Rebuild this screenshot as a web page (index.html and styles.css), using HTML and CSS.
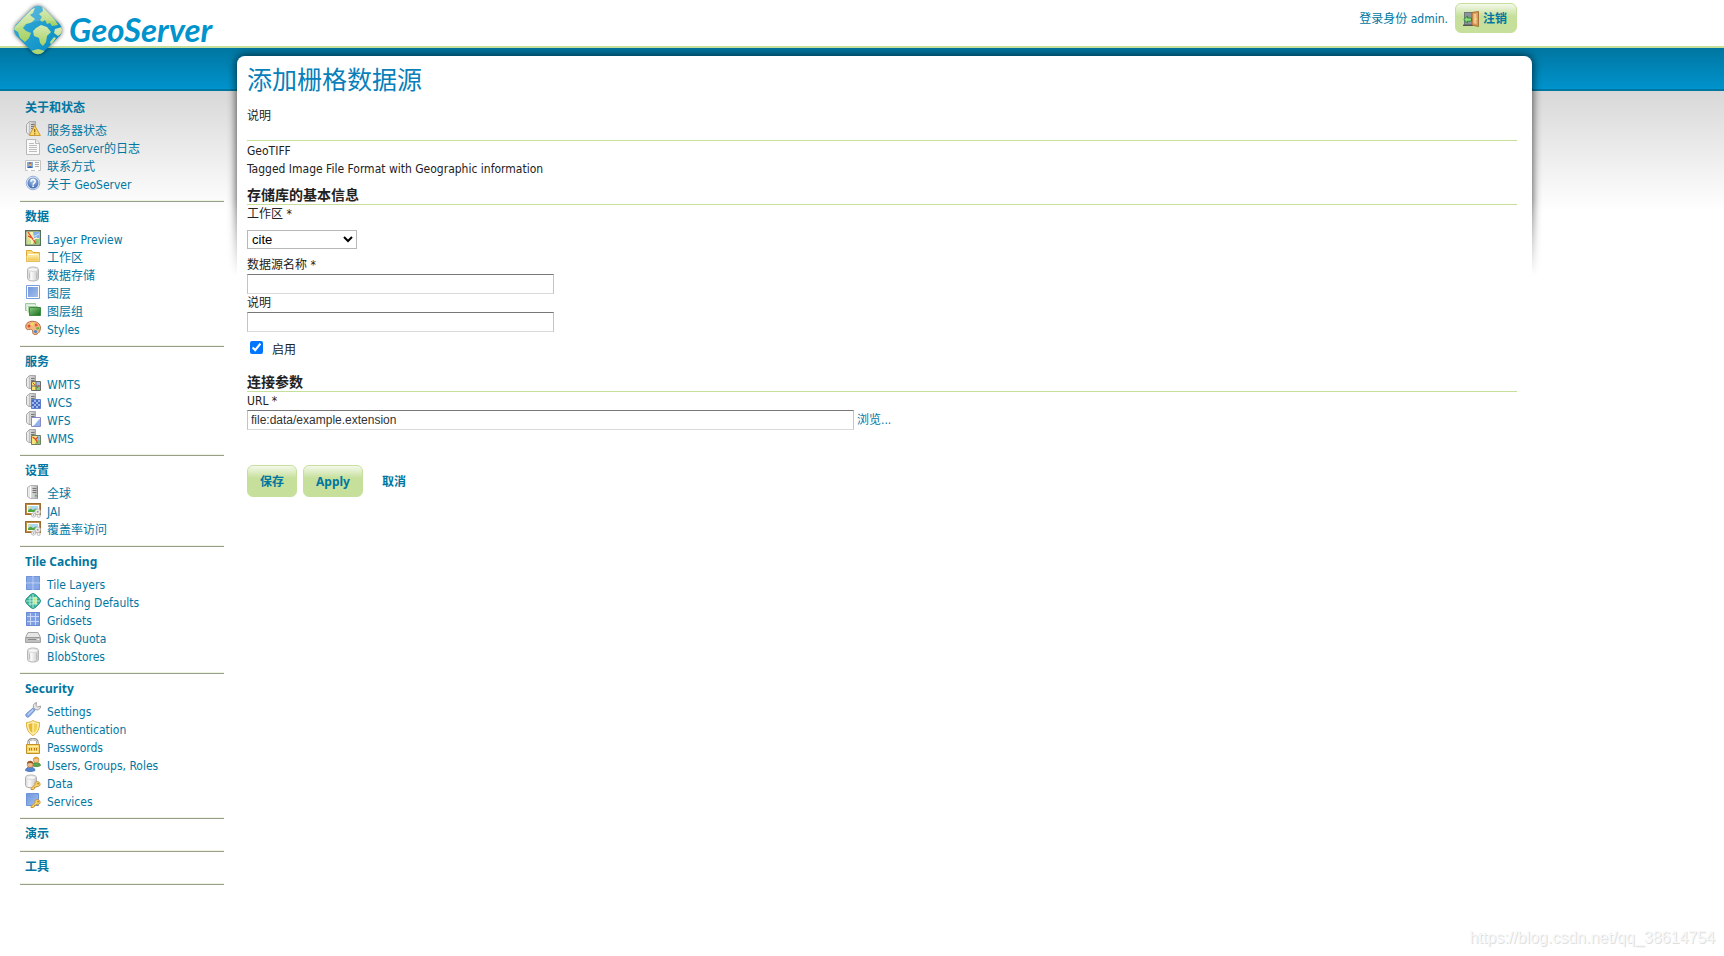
FILE: index.html
```html
<!DOCTYPE html>
<html lang="zh-CN">
<head>
<meta charset="utf-8">
<title>GeoServer: 添加栅格数据源</title>
<link rel="stylesheet" href="styles.css">
</head>
<body>
<svg class="sprite" aria-hidden="true">
  <defs>
    <linearGradient id="g-srv" x1="0" x2="1"><stop offset="0" stop-color="#f2f2f2"/><stop offset="1" stop-color="#b5b5b5"/></linearGradient>
    <linearGradient id="g-cyl" x1="0" x2="1"><stop offset="0" stop-color="#d8d8d8"/><stop offset=".35" stop-color="#fafafa"/><stop offset="1" stop-color="#c4c4c4"/></linearGradient>
    <linearGradient id="g-blue" x1="0" y1="0" x2="1" y2="1"><stop offset="0" stop-color="#6e97da"/><stop offset="1" stop-color="#a6c0ee"/></linearGradient>
    <linearGradient id="g-gold" x1="0" x2="0" y1="0" y2="1"><stop offset="0" stop-color="#fdf0a8"/><stop offset="1" stop-color="#f0c24a"/></linearGradient>
    <linearGradient id="g-green" x1="0" y1="0" x2="1" y2="1"><stop offset="0" stop-color="#8ccb85"/><stop offset="1" stop-color="#176b1c"/></linearGradient>
    <radialGradient id="g-help" cx=".5" cy=".3" r=".7"><stop offset="0" stop-color="#a9c4ea"/><stop offset="1" stop-color="#3f6cb5"/></radialGradient>
    <linearGradient id="g-globe" x1="0" y1="0" x2="1" y2="1"><stop offset="0" stop-color="#3fb0d8"/><stop offset="1" stop-color="#0089c4"/></linearGradient>
    <linearGradient id="g-land" x1="0" x2="0" y1="0" y2="1"><stop offset="0" stop-color="#d6eab4"/><stop offset="1" stop-color="#a5d163"/></linearGradient>
    <clipPath id="c-dia"><path d="M8 .5 15.5 8 8 15.5.5 8z"/></clipPath>
  </defs>
  <symbol id="server-half" viewBox="0 0 16 16">
    <path d="M1.5 3.5 4.5.5H10.5V13.5H4L1.5 11.5z" fill="url(#g-srv)" stroke="#a8a8a8"/>
    <path d="M4.500 1V13" stroke="#c2c2c2"/><path d="M6 3.500h3.500M6 5.500h3.500M6 7.500h3.500" stroke="#777"/>
  </symbol>
  <symbol id="server" viewBox="0 0 16 16">
    <path d="M2.500 3.500 5.500 1.500H12.500V14.500H5.500L2.500 12.500z" fill="url(#g-srv)" stroke="#b0b0b0"/>
    <path d="M5.500 2V14" stroke="#fff"/><path d="M7.500 4.500h4M7.500 6.500h4M7.500 8.500h4" stroke="#777"/><path d="M10 11h1.500v1.500H10z" fill="#50a84b"/><path d="M12.500 2V14.500" stroke="#888"/>
  </symbol>
  <symbol id="server-warn" viewBox="0 0 16 16">
    <use href="#server-half"/>
    <path d="M9.700 4.600 15.400 14.500H4.200z" fill="#fbd768" stroke="#cd9a35" stroke-linejoin="round"/>
    <path d="M9.700 8v3.300M9.700 12.200v1.300" stroke="#8a6417" stroke-width="1.200"/>
  </symbol>
  <symbol id="page" viewBox="0 0 16 16">
    <path d="M1.500.5H11L14.500 4V15.500H1.500z" fill="#fafafa" stroke="#b9b9b9"/><path d="M10.500.5V4.500H14.500" fill="#eee" stroke="#b9b9b9"/>
    <path d="M4 4.500h5M4 6.500h8M4 8.500h8M4 10.500h8M4 12.500h8" stroke="#bcbcbc"/>
  </symbol>
  <symbol id="vcard" viewBox="0 0 16 16">
    <path d="M.5 3.500H15.500V13.500H.5z" fill="#fbfbfb" stroke="#c4c4c4"/><path d="M2 5h6v6H2z" fill="#7fabe6"/><path d="M2.500 11C3 8.500 7 8.500 7.500 11z" fill="#3b65a8"/><circle cx="5" cy="7.500" r="1.600" fill="#e3a868"/><path d="M3.400 6.600C4 5 6 5 6.600 6.600z" fill="#774716"/>
    <path d="M10 5.500h4M10 7.500h4M10 9.500h4" stroke="#aaa"/><path d="M3 13.500h3M10 13.500h3" stroke="#fff"/>
  </symbol>
  <symbol id="help" viewBox="0 0 16 16">
    <circle cx="8" cy="8" r="6.800" fill="#dfe8f6" stroke="#86a2cf" stroke-width=".8"/><circle cx="8" cy="8" r="5.500" fill="url(#g-help)"/>
    <path d="M5.900 6.800C5.900 3.800 10.200 4 10.200 6.500 10.200 8.100 8.100 8 8.100 9.700M8.100 10.600v1.500" fill="none" stroke="#fff" stroke-width="1.500"/>
  </symbol>
  <symbol id="preview" viewBox="0 0 16 16">
    <path d="M.7.700H15.300V15.300H.7z" fill="#f6f3b5" stroke="#55705a" stroke-width="1.400"/><path d="M8 2h6v6H9z" fill="#84b0ea"/><path d="M2 2h3v12H2z" fill="#f5df72"/><path d="M10 9h4v5H8z" fill="#8dc66e"/><path d="M2 10h4v4H2z" fill="#c6df8d"/>
    <path d="M3 2 7 8 11 13.500M7 8 3 6" fill="none" stroke="#e24b36" stroke-width="1.300"/><path d="M9 6.500 14 4M8 10l4-3" stroke="#fff" stroke-width=".7"/>
  </symbol>
  <symbol id="folder" viewBox="0 0 16 16">
    <path d="M1.500 13.500V2.500H6.500L8 4.500H14.500V13.500z" fill="#f8dc7c" stroke="#dda938" stroke-linejoin="round"/><path d="M3 6.500H13" stroke="#fff"/><path d="M2 8H8L9.500 6.500H14V13H2z" fill="url(#g-gold)" stroke="#fff4bf" stroke-width=".6"/>
  </symbol>
  <symbol id="cylinder" viewBox="0 0 16 16">
    <path d="M2.500 3.500C2.500.2 13.500.2 13.500 3.500V12.500C13.500 15.800 2.500 15.800 2.500 12.500z" fill="url(#g-cyl)" stroke="#b4b4b4"/><ellipse cx="8" cy="3.600" rx="4.800" ry="1.900" fill="#f6f6f6" stroke="#cfcfcf" stroke-width=".7"/><path d="M4.500 6.500v6M11.500 6.500v6" stroke="#bdbdbd"/>
  </symbol>
  <symbol id="layer" viewBox="0 0 16 16"><path d="M1.500 1.500H14.500V14.500H1.500z" fill="#fff" stroke="#7a9fe0"/><path d="M3 3H13V13H3z" fill="url(#g-blue)"/></symbol>
  <symbol id="layers" viewBox="0 0 16 16">
    <path d="M.5 1.500H10.500V8.500H.5z" fill="#d6e9d4" stroke="#a3c8a1"/><path d="M2.500 3.500H13V11H2.500z" fill="#a8d2a4" stroke="#e6f4e5"/><path d="M4.500 5.500H15.500V13.500H4.500z" fill="url(#g-green)" stroke="#3b8a3d"/>
  </symbol>
  <symbol id="palette" viewBox="0 0 16 16">
    <path d="M1 8C-.5 3 5 .5 9.500 1.500 14.500 2.300 17 7 14.500 11.500 13 14.500 9 15.500 8 13.500 7.200 11.500 8.500 10.500 6.500 9.500 4.500 8.800 2 11 1 8z" fill="#f0b982" stroke="#b96b3e"/>
    <circle cx="4" cy="6" r="1.500" fill="#e64b38"/><circle cx="7.300" cy="4.200" r="1.500" fill="#f5dd4d"/><circle cx="11.200" cy="5" r="1.500" fill="#e8583b"/><circle cx="12.700" cy="8.300" r="1.400" fill="#64b54c"/><circle cx="10.500" cy="11.500" r="1.600" fill="#4787d8"/>
  </symbol>
  <symbol id="wmts" viewBox="0 0 16 16"><use href="#server-half"/><path d="M6.500 6.500H15.500V15.500H6.500z" fill="#f4e070" stroke="#6b6b6b"/><path d="M11 7h4v4h-4z" fill="#9cc0ee"/><path d="M11 11h4v4h-4z" fill="#8bc46f"/><path d="m7.500 7.500 3 3M12 13l2-3" stroke="#dc4c32"/><path d="M11 6V16M6 11H16" stroke="#6b6b6b"/></symbol>
  <symbol id="wcs" viewBox="0 0 16 16"><use href="#server-half"/><path d="M6.500 6.500H15.500V15.500H6.500z" fill="#9db8ee" stroke="#5f7fcb"/><path d="M7 7h2v2H7zM11 7h2v2h-2zM9 9h2v2H9zM13 9h2v2h-2zM7 11h2v2H7zM11 11h2v2h-2zM9 13h2v2H9zM13 13h2v2h-2z" fill="#4969be"/></symbol>
  <symbol id="wfs" viewBox="0 0 16 16"><use href="#server-half"/><path d="M6.500 6.500H15.500V15.500H6.500z" fill="#fff" stroke="#8b87c9"/><path d="M15 8V15H7.500C11 14 12 9 15 8z" fill="#8eb4ec"/></symbol>
  <symbol id="wms" viewBox="0 0 16 16"><use href="#server-half"/><path d="M6.500 6.500H15.500V15.500H6.500z" fill="#f6e476" stroke="#6f7f61"/><path d="M12 7h3v4h-3z" fill="#94bbed"/><path d="M12 11h3v4h-5z" fill="#8bc46f"/><path d="m7.500 8 3 2 2 4M13 8l-3 3" fill="none" stroke="#dc4c32" stroke-width="1.200"/></symbol>
  <symbol id="picture" viewBox="0 0 16 16">
    <path d="M0 1H16V13H0z" fill="#c08a42"/><path d="M.5 1.500H15.500V12.500H.5z" fill="none" stroke="#9c6a2c"/><path d="M2 3H14V11H2z" fill="#fff"/><path d="M3 4H13V10H3z" fill="#a9d8f5"/><path d="M3 8.500 5.500 6.500 8 8 11 6.500 13 8V10H3z" fill="#4fa53f"/><path d="M3.500 4.500h2v2h-2z" fill="#f6e36a"/>
    <g fill="#eee" stroke="#b5b5b5" stroke-width=".8"><circle cx="12.700" cy="9.800" r="2.800"/><circle cx="8.500" cy="13" r="2.200"/><circle cx="13.700" cy="14" r="1.600"/></g><circle cx="12.700" cy="9.800" r="1" fill="#999"/><circle cx="8.500" cy="13" r=".7" fill="#999"/>
  </symbol>
  <symbol id="tiles" viewBox="0 0 16 16"><path d="M1 1H15V15H1z" fill="#7295dc"/><path d="M2 2h5.500v5.500H2zM9 2h5v5.500H9zM2 9h5.500v5H2zM9 9h5v5H9z" fill="#86a8e6"/><path d="M8 1V15M1 8H15" stroke="#c9d9f7"/></symbol>
  <symbol id="grid" viewBox="0 0 16 16"><path d="M1 1H15V15H1z" fill="#7f9fe2"/><path d="M5.500 1V15M10.500 1V15M1 5.500H15M1 10.500H15" stroke="#c9d9f7"/><path d="M1.500 1.500H14.500V14.500H1.500z" fill="none" stroke="#6b8cd6"/></symbol>
  <symbol id="cache-globe" viewBox="0 0 16 16"><path d="M8 .5C10 .5 15.500 6 15.500 8S10 15.500 8 15.500.5 10 .5 8 6 .5 8 .5z" fill="#35b39a" stroke="#1f8f86"/><g clip-path="url(#c-dia)"><path d="M8 4h4v7H8z" fill="#bce47d"/><path d="M5 0V16M8 0V16M11 0V16M0 5H16M0 8H16M0 11H16" stroke="#d9f6e8" stroke-width=".8"/></g></symbol>
  <symbol id="disk" viewBox="0 0 16 16"><path d="M.5 8.500 3 3.500H13L15.500 8.500V13.500H.5z" fill="#e6e6e6" stroke="#a5a5a5" stroke-linejoin="round"/><path d="M1 8.500H15V13H1z" fill="#c0c0c0"/><path d="M3 10.500h8" stroke="#888"/><path d="M12.500 10.500h1.500" stroke="#fff"/><path d="M1 8.500H15" stroke="#999"/></symbol>
  <symbol id="wrench" viewBox="0 0 16 16"><path d="M9.800 1.300 11.500.5 11 3.500 12.700 5 15.500 4C15.800 7 13 8.500 11 7.700L9 6.500C7.800 4.500 8.300 2.300 9.800 1.300z" fill="#e7e7e7" stroke="#969696" stroke-width=".9"/><path d="M7.800 6.200 10 8.300 4 14.700C2 16.200-.3 13.500 1.300 11.800z" fill="#8fb3e9" stroke="#5e82c6" stroke-width=".9"/><path d="M3 12.500 8 7.600" stroke="#d8e5fb"/></symbol>
  <symbol id="shield" viewBox="0 0 16 16"><path d="M1.500 2.500C4 2.500 6.500 1.500 8 .5 9.500 1.500 12 2.500 14.500 2.500 15 9 12 13.500 8 15.500 4 13.500 1 9 1.500 2.500z" fill="#fdf0ac" stroke="#dfad3d"/><path d="M3.500 4.200 7.300 3V13C5 11.500 3.500 8.500 3.500 4.200z" fill="#e8b92f"/><path d="M8.700 3 12.500 4.200C12.500 8.500 11 11.500 8.700 13z" fill="#f3d050"/></symbol>
  <symbol id="lock" viewBox="0 0 16 16"><path d="M3.500 8V4.500C3.500-.2 12.500-.2 12.500 4.500V8" fill="none" stroke="#8d8d8d" stroke-width="2.400"/><path d="M3.500 7V4.500C3.500.2 12.500.2 12.500 4.500V7" fill="none" stroke="#e4e4e4"/><path d="M1.500 6.500H14.500V15.500H1.500z" fill="#f7d566" stroke="#c48f26"/><path d="M3 8.500H13M3 13.500H13" stroke="#fdf0a8"/><path d="M4.500 10v2.500M6.500 10v2.500M9.500 10v2.500M11.500 10v2.500" stroke="#b97b1d"/></symbol>
  <symbol id="users" viewBox="0 0 16 16"><path d="M7 9.500C7 5.500 15.500 5.500 15.500 9.500 14 11 9 11 7 9.500z" fill="#5aa54d" stroke="#3c8038" stroke-width=".7"/><circle cx="11.200" cy="4" r="2.800" fill="#f0c38a" stroke="#bd8038" stroke-width=".6"/><path d="M8.300 3.500C8-.3 14.300-.3 14 3.500 12 2.500 10.500 2 8.300 3.500z" fill="#d8a139"/><path d="M.5 14.500C.5 9.800 10 9.800 10 14.500 7 16 3.500 16 .5 14.500z" fill="#5486d1" stroke="#3866aa" stroke-width=".7"/><circle cx="5.200" cy="8.500" r="3" fill="#efbb88" stroke="#a46538" stroke-width=".6"/><path d="M2.100 8C1.800 3.700 8.600 3.700 8.300 8 6.500 6.800 4 6.300 2.100 8z" fill="#99572b"/></symbol>
  <symbol id="key" viewBox="0 0 16 16"><path d="M6 14.500 10 10.500C9.300 8 12 6.800 14 8.200 16.300 10.200 14.700 13 12 12.300L11 13.200H9.500V14.700L8 15.500H6z" fill="#f9d46b" stroke="#c18a28" stroke-width=".9"/><circle cx="13" cy="9.800" r=".8" fill="#a36d19"/></symbol>
  <symbol id="data-key" viewBox="0 0 16 16"><path d="M.5 3.500C.5.2 11.500.2 11.500 3.500V11.500C11.500 14.500.5 14.500.5 11.500z" fill="url(#g-cyl)" stroke="#adadad"/><ellipse cx="6" cy="3.500" rx="4.700" ry="1.900" fill="#f8f8f8" stroke="#ccc" stroke-width=".7"/><use href="#key"/></symbol>
  <symbol id="layer-key" viewBox="0 0 16 16"><path d="M1.500 1.500H13.500V13.500H1.500z" fill="url(#g-blue)" stroke="#6d94dc"/><use href="#key"/></symbol>
  <symbol id="door" viewBox="0 0 16 16"><path d="M1 1H9.500V14H1z" fill="#6d7678"/><path d="M2 2H9V13.500H2z" fill="#8b9496"/><path d="M0 14.300H10" stroke="#555" stroke-width="1.400"/><path d="M9 1.500 15.500.5V15.500L9 14z" fill="#d99a54" stroke="#9c602a" stroke-width=".8"/><path d="M10.500 3 13.500 2.500V13L10.500 12.200z" fill="#f0c58f"/><circle cx="12.700" cy="8" r=".9" fill="#f9e15e"/><path d="M.7 8.500 4.500 5V7H8.500V10.200H4.500V12z" fill="#8cdb82" stroke="#27852e" stroke-width=".9"/></symbol>
</svg>

<header class="header">
  <div class="header-inner">
    <a class="logo" href="#">
      <svg class="logo-mark" viewBox="0 0 56 56" aria-hidden="true">
        <defs><clipPath id="c-logo"><path d="M22.500 6Q28 1.500 33.500 6L50 22.500Q54 28 50 33.500L33.500 50Q28 54.500 22.500 50L6 33.500Q2 28 6 22.500z"/></clipPath></defs>
        <path class="logo-shade" d="M22.500 6Q28 1.500 33.500 6L50 22.500Q54 28 50 33.500L33.500 50Q28 54.500 22.500 50L6 33.500Q2 28 6 22.500z" fill="url(#g-globe)"/>
        <g clip-path="url(#c-logo)" fill="url(#g-land)">
          <path d="M3 27 13 16 22 7 25 6 23 11 20 13 25 17 22 20 20 21 16 22 13 26 16 29 21 31 19 36 15 40 10 36 8 30z"/>
          <path d="M32 4 39 11 45 18 48 23 42 24 40 21 37 22 35 18 32 20 30 18 32 15 29 12 33 9z"/>
          <path d="M26 26 31 23 37 25 41 30 37 34 36 40 33 44 30 41 29 36 24 34 23 29z"/>
          <path d="M45 27 52 25 53 30 48 34 44 31zM40 40l4-5 2 1-5 7zM21 49l7-2 7 2-7 7z"/>
        </g>
        <path clip-path="url(#c-logo)" d="M0 0H56V22Q28 12 0 30z" fill="#fff" opacity=".15"/>
      </svg>
      <span class="logo-text">GeoServer</span>
    </a>
    <div class="session">
      <span>登录身份 admin.</span>
      <button class="btn btn-logout" type="button"><svg class="icon" aria-hidden="true"><use href="#door"/></svg>注销</button>
    </div>
  </div>
</header>

<div class="band"></div>

<div class="page">
  <nav class="sidebar">
    <section>
      <h2>关于和状态</h2>
      <ul>
        <li><a href="#"><svg class="icon"><use href="#server-warn"/></svg>服务器状态</a></li>
        <li><a href="#"><svg class="icon"><use href="#page"/></svg>GeoServer的日志</a></li>
        <li><a href="#"><svg class="icon"><use href="#vcard"/></svg>联系方式</a></li>
        <li><a href="#"><svg class="icon"><use href="#help"/></svg>关于 GeoServer</a></li>
      </ul>
    </section>
    <section>
      <h2>数据</h2>
      <ul>
        <li><a href="#"><svg class="icon"><use href="#preview"/></svg>Layer Preview</a></li>
        <li><a href="#"><svg class="icon"><use href="#folder"/></svg>工作区</a></li>
        <li><a href="#"><svg class="icon"><use href="#cylinder"/></svg>数据存储</a></li>
        <li><a href="#"><svg class="icon"><use href="#layer"/></svg>图层</a></li>
        <li><a href="#"><svg class="icon"><use href="#layers"/></svg>图层组</a></li>
        <li><a href="#"><svg class="icon"><use href="#palette"/></svg>Styles</a></li>
      </ul>
    </section>
    <section>
      <h2>服务</h2>
      <ul>
        <li><a href="#"><svg class="icon"><use href="#wmts"/></svg>WMTS</a></li>
        <li><a href="#"><svg class="icon"><use href="#wcs"/></svg>WCS</a></li>
        <li><a href="#"><svg class="icon"><use href="#wfs"/></svg>WFS</a></li>
        <li><a href="#"><svg class="icon"><use href="#wms"/></svg>WMS</a></li>
      </ul>
    </section>
    <section>
      <h2>设置</h2>
      <ul>
        <li><a href="#"><svg class="icon"><use href="#server"/></svg>全球</a></li>
        <li><a href="#"><svg class="icon"><use href="#picture"/></svg>JAI</a></li>
        <li><a href="#"><svg class="icon"><use href="#picture"/></svg>覆盖率访问</a></li>
      </ul>
    </section>
    <section>
      <h2>Tile Caching</h2>
      <ul>
        <li><a href="#"><svg class="icon"><use href="#tiles"/></svg>Tile Layers</a></li>
        <li><a href="#"><svg class="icon"><use href="#cache-globe"/></svg>Caching Defaults</a></li>
        <li><a href="#"><svg class="icon"><use href="#grid"/></svg>Gridsets</a></li>
        <li><a href="#"><svg class="icon"><use href="#disk"/></svg>Disk Quota</a></li>
        <li><a href="#"><svg class="icon"><use href="#cylinder"/></svg>BlobStores</a></li>
      </ul>
    </section>
    <section>
      <h2>Security</h2>
      <ul>
        <li><a href="#"><svg class="icon"><use href="#wrench"/></svg>Settings</a></li>
        <li><a href="#"><svg class="icon"><use href="#shield"/></svg>Authentication</a></li>
        <li><a href="#"><svg class="icon"><use href="#lock"/></svg>Passwords</a></li>
        <li><a href="#"><svg class="icon"><use href="#users"/></svg>Users, Groups, Roles</a></li>
        <li><a href="#"><svg class="icon"><use href="#data-key"/></svg>Data</a></li>
        <li><a href="#"><svg class="icon"><use href="#layer-key"/></svg>Services</a></li>
      </ul>
    </section>
    <section><h2>演示</h2></section>
    <section><h2>工具</h2></section>
  </nav>

  <main class="main">
    <div class="main-shadow"></div>
    <div class="main-body">
      <div class="page-header">
        <h1>添加栅格数据源</h1>
        <p>说明</p>
      </div>
      <p>GeoTIFF</p>
      <p>Tagged Image File Format with Geographic information</p>
      <form>
        <fieldset>
          <legend>存储库的基本信息</legend>
          <label for="workspace">工作区 *</label>
          <select id="workspace"><option>cite</option></select>
          <label for="name">数据源名称 *</label>
          <input class="text" id="name" type="text">
          <label for="description">说明</label>
          <input class="text" id="description" type="text">
          <div class="check"><input id="enabled" type="checkbox" checked><label for="enabled">启用</label></div>
        </fieldset>
        <fieldset>
          <legend>连接参数</legend>
          <label for="url">URL *</label>
          <div class="url-row"><input class="text text-long" id="url" type="text" value="file:data/example.extension"><a href="#">浏览...</a></div>
        </fieldset>
        <div class="actions">
          <button class="btn" type="button">保存</button>
          <button class="btn" type="button">Apply</button>
          <a class="cancel" href="#">取消</a>
        </div>
      </form>
    </div>
  </main>
</div>
<div class="watermark">https://blog.csdn.net/qq_38614754</div>
</body>
</html>
```
FILE: styles.css
```css
* { box-sizing: border-box; }

body {
  margin: 0;
  position: relative;
  min-height: 100vh;
  background: #fff;
  color: #222;
  font: 12px/18px "DejaVu Sans Condensed", "Open Sans", "Noto Sans CJK SC", sans-serif;
}

h1, h2, p, ul, fieldset, legend { margin: 0; padding: 0; }
ul { list-style: none; }
fieldset { border: 0; min-width: 0; }
a { color: #0076a1; text-decoration: none; }

.sprite { position: absolute; width: 0; height: 0; }
.icon { width: 16px; height: 16px; flex: none; }

/* header */
.header { height: 48px; border-bottom: 2px solid #c6e09b; position: relative; z-index: 2; }
.header-inner { display: flex; justify-content: space-between; align-items: flex-start; max-width: 1517px; }
.logo { display: flex; align-items: flex-start; padding: 2px 0 0 10px; color: #0093cc; }
.logo-mark { width: 56px; height: 56px; overflow: visible; }
.logo-shade { filter: drop-shadow(0 0 2px rgba(0, 0, 0, .6)); }
.logo-text { font: italic 700 33px/36px Lato, sans-serif; padding: 9px 0 0 3px; }
.session { display: flex; align-items: center; gap: 7px; padding-top: 3px; color: #0076a1; }
.session span { padding-top: 2px; }

.band {
  height: 43px;
  background: linear-gradient(#0076a1, #0093cc);
  border-bottom: 2px solid #0076a1;
}

/* buttons */
.btn {
  height: 32px;
  padding: 2px 12px 0;
  border: 1px solid #c6e09b;
  border-radius: 6px;
  background: linear-gradient(#f4f9eb, #c6e09b 12px);
  color: #0076a1;
  font: 700 12px/18px "Noto Sans", "Noto Sans CJK SC", sans-serif;
}
.btn-logout { display: flex; align-items: center; gap: 4px; height: 30px; padding: 2px 9px 0 7px; }

/* columns */
.page {
  display: grid;
  grid-template-columns: 237px minmax(0, 1295px) 1fr;
  background: linear-gradient(#d8d8d8, #fff 120px);
}

.sidebar { padding: 3px 13px 0 20px; }
.sidebar section { padding: 6px 5px 8px; border-bottom: 1px solid #9a9f8c; box-shadow: inset 0 -1px #eef4e2; }
.sidebar section:first-child { padding-top: 5px; }
.sidebar h2 { font: 700 12px/18px "Noto Sans", "Noto Sans CJK SC", sans-serif; color: #0076a1; }
.sidebar ul { padding-top: 4px; }
.sidebar a { display: flex; align-items: flex-start; gap: 6px; height: 18px; line-height: 20px; }

/* content panel */
.main { position: relative; margin-top: -35px; }
.main-shadow {
  position: absolute;
  inset: -8px -12px auto;
  height: 228px;
  padding: 8px 12px 0;
  overflow: hidden;
  -webkit-mask-image: linear-gradient(#000 150px, transparent);
  mask-image: linear-gradient(#000 150px, transparent);
}
.main-shadow::before { content: ""; display: block; height: 300px; border-radius: 8px; box-shadow: 0 0 8px 1px rgba(0, 0, 0, .65); }
.main-body { position: relative; min-height: 100%; padding: 8px 15px 0 10px; border-radius: 8px; background: #fff; }

.page-header { height: 77px; margin-bottom: 1px; border-bottom: 1px solid #c6e09b; }
h1 { font-size: 25px; line-height: 34px; font-weight: 400; color: #0a7fba; margin-bottom: 9px; }

legend { float: left; width: 100%; margin-top: 8px; border-bottom: 1px solid #c6e09b; font-size: 14px; line-height: 18px; font-weight: 700; }
fieldset label { display: block; clear: both; }
select {
  display: block;
  width: 110px;
  height: 19px;
  margin: 7px 0;
  border: 1px solid #b8b8b8;
  background: #fff;
  font: 13px "Liberation Sans", Arial, sans-serif;
}
.text {
  display: block;
  width: 307px;
  max-width: 100%;
  height: 20px;
  padding: 1px 3px;
  border: 1px solid #c4c4c4;
  border-top-color: #777;
  border-bottom-color: #dadada;
  color: #333;
  font: 12px "Liberation Sans", Arial, sans-serif;
}
.text-long { width: 607px; }
.check { display: flex; align-items: flex-start; gap: 9px; padding: 9px 0 6px 3px; }
.check input { width: 13px; height: 13px; margin: 0; }
.url-row { display: flex; align-items: center; gap: 3px; }
.actions { display: flex; align-items: center; gap: 6px; padding-top: 35px; }
.cancel { margin-left: 13px; padding-top: 2px; font-weight: 700; }

.watermark {
  position: absolute;
  right: 9px;
  bottom: 8px;
  color: #f8f8f8;
  font: 16px/20px "Liberation Sans", Arial, sans-serif;
  text-shadow: 1px 1px #dedede;
}
```
